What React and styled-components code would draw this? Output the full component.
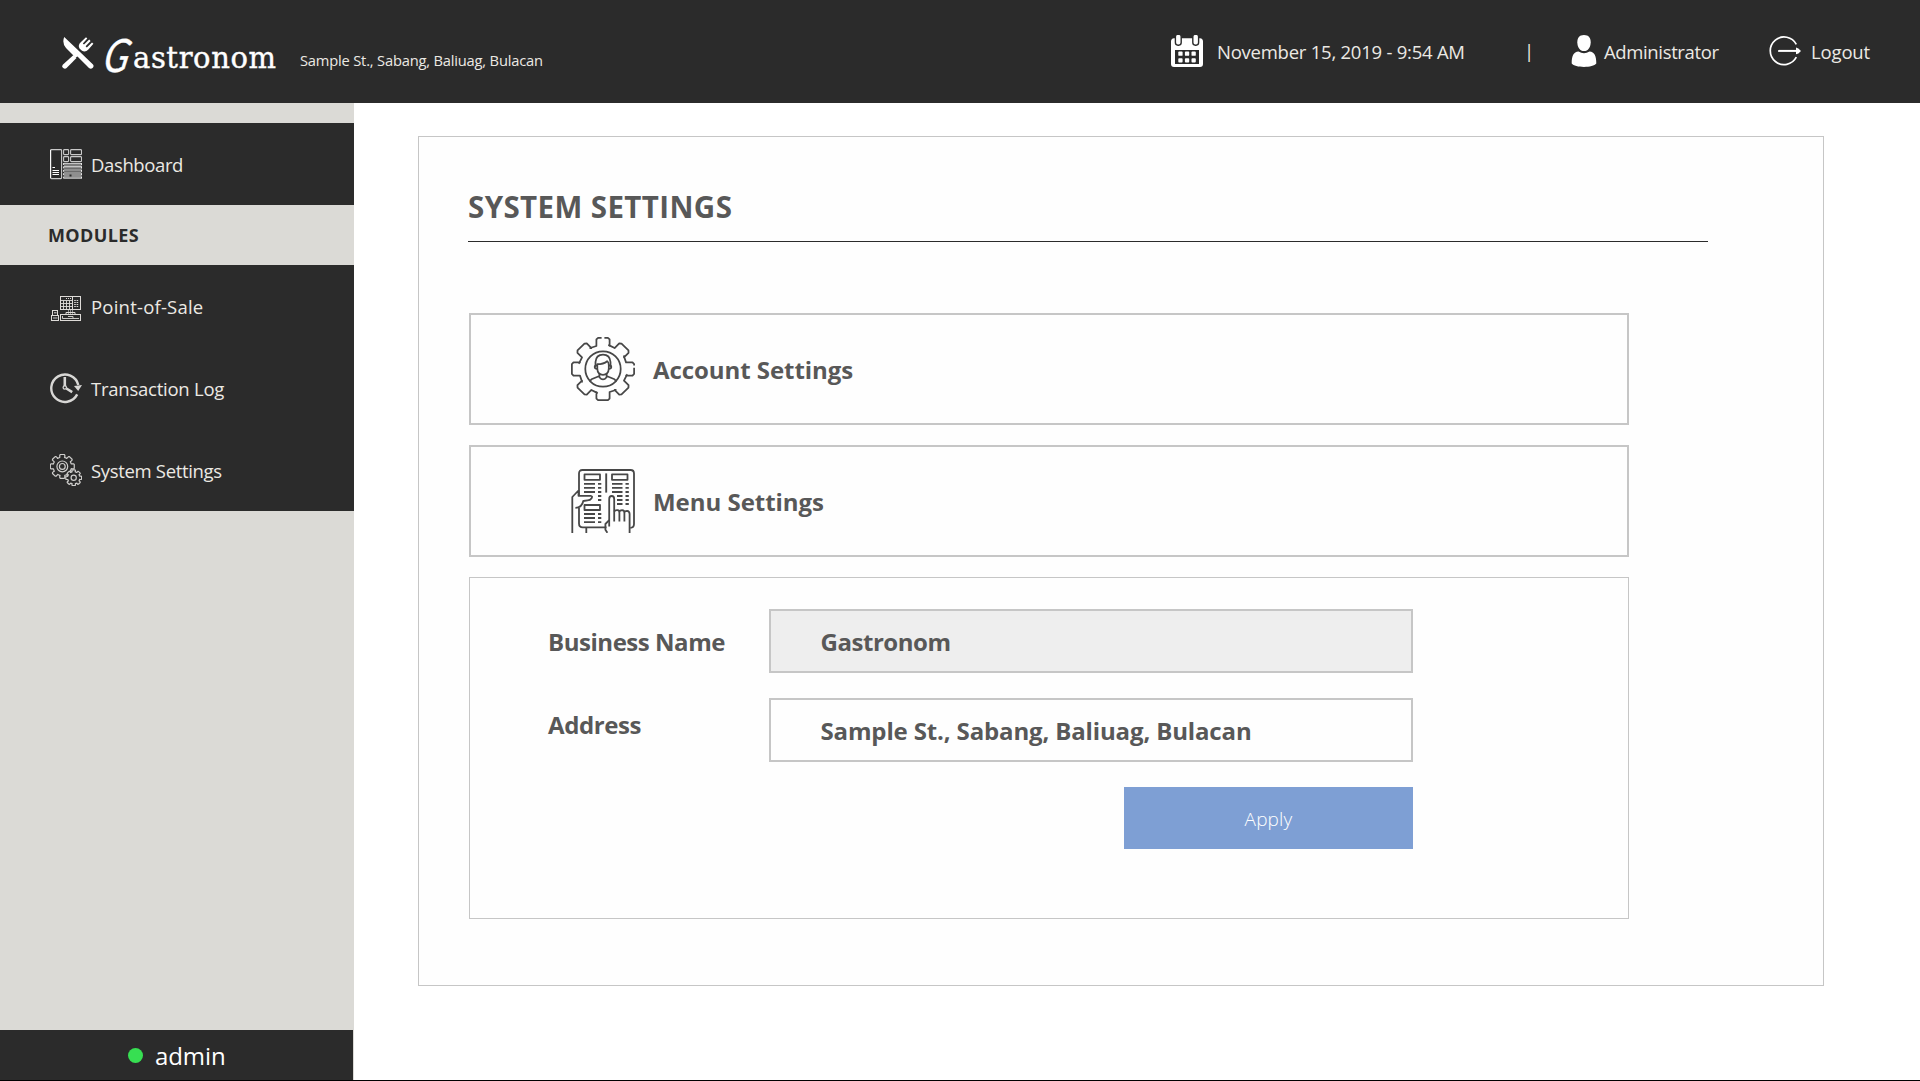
import React from 'react';
import styled, { createGlobalStyle } from 'styled-components';

const dark = '#2b2b2b';
const stone = '#dbdad6';
const line = '#c6c6c6';
const ink = '#585858';

const GlobalStyle = createGlobalStyle`
  *, *::before, *::after { box-sizing: border-box; }
  body {
    margin: 0;
    background: #fff;
    font-family: "Open Sans", "Noto Sans", sans-serif;
  }
`;

const Page = styled.div`
  display: flex;
  flex-direction: column;
  width: 1920px;
  height: 1081px;
  overflow: hidden;
  border-bottom: 1px solid #000;
`;

const Header = styled.header`
  display: flex;
  flex: none;
  height: 103px;
  padding-left: 62px;
  background: ${dark};
  color: #ebe9e4;
`;

const LogoIcon = styled.svg`
  flex: none;
  width: 32px;
  height: 32px;
  margin-top: 37px;
`;

const Wordmark = styled.div`
  display: flex;
  align-items: baseline;
  width: 206px;
  height: 60px;
  margin-top: 21px;
  padding-left: 8px;
  color: #fff;
  font-family: "DejaVu Serif", serif;
  font-size: 29px;
  line-height: 60px;
  letter-spacing: 0.6px;
  white-space: nowrap;
  -webkit-text-stroke: 0.4px #fff;
`;

const Initial = styled.span`
  width: 31px;
  font-family: Lato, sans-serif;
  font-size: 46px;
  font-style: italic;
  letter-spacing: 0;
  transform: translate(2px, 4px) skewX(-12deg) scaleX(0.8);
  transform-origin: 0 60%;
`;

const BranchAddress = styled.p`
  margin: 50px 0 0;
  font-size: 14.7px;
  line-height: 20px;
  letter-spacing: -0.19px;
  white-space: nowrap;
`;

const HeaderTools = styled.div`
  display: grid;
  grid-template-columns: 353px 44px 201px 151px;
  align-items: center;
  height: 102px;
  margin-left: auto;
`;

const Tool = styled.div`
  display: flex;
  align-items: center;
  gap: ${(p) => p.$gap}px;
`;

const Text = styled.span`
  padding-top: ${(p) => p.$drop ?? 2}px;
  font-size: 18.5px;
  line-height: 26px;
  letter-spacing: ${(p) => p.$track ?? 0}px;
  white-space: nowrap;
`;

const Glyph = styled.svg`
  flex: none;
  display: block;
  width: ${(p) => p.$size ?? 32}px;
  height: ${(p) => p.$size ?? 32}px;
`;

const Body = styled.div`
  display: flex;
  flex: 1;
  min-height: 0;
`;

const Sidebar = styled.nav`
  display: flex;
  flex-direction: column;
  width: 354px;
  padding-top: 20px;
  background: ${stone};
`;

const NavItem = styled.a`
  display: flex;
  align-items: center;
  gap: 9px;
  height: 82px;
  padding-left: 50px;
  background: ${dark};
  color: #ebe9e4;
`;

const NavHeading = styled.h2`
  height: 60px;
  margin: 0;
  padding-left: 48px;
  color: ${dark};
  font-size: 18px;
  font-weight: 700;
  line-height: 61px;
  letter-spacing: 0.37px;
`;

const UserBar = styled.div`
  display: flex;
  align-items: center;
  gap: 12px;
  width: 353px;
  height: 50px;
  margin-top: auto;
  padding-left: 128px;
  background: ${dark};
  color: #fff;
  font-size: 24px;
  line-height: 50px;
  letter-spacing: -0.1px;
`;

const UserName = styled.span`
  padding-top: 2px;
`;

const StatusDot = styled.span`
  width: 15px;
  height: 15px;
  border-radius: 50%;
  background: #37df52;
`;

const Main = styled.main`
  flex: 1;
  padding: 33px 0 0 64px;
`;

const Card = styled.section`
  width: 1406px;
  height: 850px;
  padding: 44px 49px 0;
  border: 1px solid ${line};
  background: #fefefe;
`;

const Title = styled.h1`
  width: 1240px;
  height: 61px;
  margin: 0 0 71px;
  padding-top: 6px;
  border-bottom: 1px solid ${dark};
  color: ${ink};
  font-size: 29.5px;
  font-weight: 700;
  line-height: 40px;
  letter-spacing: 0.4px;
`;

const Stack = styled.div`
  display: flex;
  flex-direction: column;
  gap: 20px;
  width: 1160px;
  margin-left: 1px;
`;

const OptionButton = styled.button`
  display: flex;
  align-items: center;
  gap: 18px;
  height: 112px;
  padding: 0 0 0 100px;
  border: 2px solid ${line};
  background: #fefefe;
  color: ${ink};
  font-family: inherit;
  text-align: left;
`;

const OptionText = styled.span`
  padding-top: 2px;
  font-size: 24px;
  font-weight: 700;
  line-height: 34px;
  letter-spacing: ${(p) => p.$track}px;
`;

const Form = styled.form`
  display: grid;
  grid-template-columns: 221px 644px;
  grid-template-rows: 64px 64px 62px;
  row-gap: 25px;
  height: 342px;
  padding: 31px 0 0 78px;
  border: 1px solid ${line};
`;

const Label = styled.label`
  align-self: center;
  padding-top: 1px;
  padding-bottom: ${(p) => p.$lift ?? 0}px;
  color: ${ink};
  font-size: 24px;
  font-weight: 700;
  line-height: 34px;
  letter-spacing: ${(p) => p.$track}px;
`;

const Field = styled.input`
  width: 644px;
  height: 64px;
  padding: 0 49.5px;
  border: 2px solid ${line};
  border-radius: 0;
  outline: none;
  background: ${(p) => (p.readOnly ? '#eeeeee' : '#fefefe')};
  color: ${ink};
  font: 700 24px "Open Sans", "Noto Sans", sans-serif;
  letter-spacing: ${(p) => p.$track}px;
`;

const ApplyButton = styled.button`
  grid-column: 2;
  justify-self: end;
  width: 289px;
  height: 62px;
  padding: 1px 0 0;
  border: 0;
  background: #7e9fd4;
  color: #fff;
  font: 300 19px "Open Sans", "Noto Sans", sans-serif;
  letter-spacing: 0.17px;
`;

/* Outline of an eight-toothed cog centred on (cx, cy), scaled from a 32-unit radius. */
function cogPath(cx, cy, r) {
  const k = r / 32;
  const tooth = [[-13, -21.3], [-6.7, -23.4], [-6.7, -30], [-5, -31.6], [5, -31.6], [6.7, -30], [6.7, -23.4]];
  const pts = [];
  for (let i = 0; i < 8; i += 1) {
    const a = (i * Math.PI) / 4;
    tooth.forEach(([x, y]) => {
      const px = cx + k * (x * Math.cos(a) - y * Math.sin(a));
      const py = cy + k * (x * Math.sin(a) + y * Math.cos(a));
      pts.push(`${px.toFixed(2)} ${py.toFixed(2)}`);
    });
  }
  return `M${pts.join('L')}Z`;
}

const CutleryIcon = () => (
  <LogoIcon viewBox="0 0 32 32" fill="#fff">
    <path d="M2.2 0 L17.5 14.5 L31 27.5 Q32.3 29.3 30.6 31 Q28.8 32.6 27 31 L15.5 19.5 L13.5 20.5 L4 11 Q-.2 6 2.2 0Z" />
    <path d="M11.5 18 L14.5 21 L4.6 31 Q3 32.6 1.2 31 Q-.5 29.3 1 27.5Z" />
    <path d="M17.5 11.5 Q15.5 8 19 5 L24 .3 L25.3 1.5 L20.8 6.4 L22 7.6 L27.2 2.6 L28.6 4 L23.6 9.2 L24.8 10.4 L30 5.4 L31.4 6.7 L26.4 12.4 Q23.5 15.6 20 13.8Z" />
  </LogoIcon>
);

const CalendarIcon = () => (
  <Glyph viewBox="0 0 32 32">
    <path fill="#fff" fillRule="evenodd" d="M3 3.2H29Q32 3.6 32 6.6V29Q32 32 29 32H3Q0 32 0 29V6.6Q0 3.6 3 3.2ZM4 15V29H28V15Z" />
    <g fill="#fff" stroke={dark} strokeWidth="1.4">
      <rect x="4.4" y="-.8" width="5.8" height="11" rx="2.6" />
      <rect x="21.8" y="-.8" width="5.8" height="11" rx="2.6" />
    </g>
    <g fill="#fff">
      {[7.3, 13.9, 20.5].map((x) => [16.6, 23.2].map((y) => (
        <rect key={`${x}-${y}`} x={x} y={y} width="4.3" height="4.2" rx=".9" />
      )))}
    </g>
  </Glyph>
);

const PersonIcon = () => (
  <Glyph viewBox="0 0 32 32" fill="#fff">
    <path d="M16 0C20.6 0 22.7 2.8 22.7 7.2C22.7 12.4 20 16 16 16S9.3 12.4 9.3 7.2C9.3 2.8 11.4 0 16 0Z" />
    <path d="M10.5 16.6Q16 19.8 21.5 16.6C26.5 17 28.3 21 28.3 28.6C26.6 30.9 21.5 32 16 32S5.4 30.9 3.7 28.6C3.7 21 5.5 17 10.5 16.6Z" />
  </Glyph>
);

const LogoutIcon = () => (
  <Glyph viewBox="0 0 32 32" fill="none" stroke="#fff">
    <path strokeWidth="1.7" d="M27.3 9.4A13.8 13.8 0 1 0 27.3 22.2" />
    <path strokeWidth="2" d="M9.2 15.9H28" />
    <path fill="#fff" stroke="none" d="M27 12.6L29.4 13.4L32 15.9L29.4 18.4L27 19.2Z" />
  </Glyph>
);

const DashboardIcon = () => (
  <Glyph viewBox="0 0 32 32" fill="none" stroke="#c9c9c9">
    <rect x=".6" y="1.6" width="11" height="29" rx=".8" strokeWidth="1.1" />
    <path stroke="#fff" d="M.6 2V30M2.5 19.5H5M2.5 22.5H9M2.5 24.5H9M2.5 26.5H9" />
    <g strokeWidth="1.1">
      <rect x="13.6" y="1.6" width="5" height="5" rx=".8" />
      <rect x="20.6" y="1.6" width="10.9" height="5" rx=".8" />
      <rect x="13.6" y="8.6" width="5" height="5" rx=".8" />
      <rect x="20.6" y="8.6" width="10.9" height="5" rx=".8" />
    </g>
    <rect x="14" y="15" width="17.5" height="15.5" fill="#8e8e8e" stroke="none" />
    <path stroke="#c4c4c4" d="M14 15.5H31.5M14 18.5H31.5M14 30.2H31.5" />
    <path stroke="#6b6b6b" d="M14 17H31.5M14 20.5H31.5M14 23.5H31.5" />
    <path stroke="#e8e8e8" strokeDasharray="2 1.4" d="M13.6 15V30.5M31.5 15V30.5" />
    <rect x="19.5" y="26.5" width="2" height="2" fill={dark} stroke="none" />
  </Glyph>
);

const RegisterIcon = () => (
  <Glyph viewBox="0 0 32 32" fill="none" stroke="#dedbd8">
    <rect x="10.5" y="6.5" width="20" height="13" />
    <path d="M22.5 6.5V19.5" />
    <path strokeWidth=".9" d="M13.5 10.5V19M16.5 10.5V19M19.5 10.5V19M11 10.5H22M11 13.5H22M11 16.5H22" />
    <path strokeDasharray="1 1" d="M16 8.5H21" />
    <path strokeDasharray="1.6 .8" d="M24.2 10.5H29M24.2 12.5H29M24.2 14.5H29M24.2 16.5H29" />
    <path stroke="#8e8e8e" d="M18.5 20V24M20.5 20V24M22.5 20V24" />
    <path d="M16 22.5H25M16 22.5V24M25 22.5V24" />
    <rect x="10.5" y="24.5" width="20" height="6" />
    <path d="M12.5 26V28.5H29M18 26.5H23V28" strokeWidth=".9" />
    <rect x="2.5" y="20.5" width="5" height="5" />
    <path d="M4 22.8H6.5" />
    <rect x="1.5" y="25.5" width="7" height="5" />
    <path stroke="#8e8e8e" strokeWidth="1.6" d="M3 28H7.5" />
  </Glyph>
);

const HistoryIcon = () => (
  <Glyph viewBox="0 0 32 32" fill="none" stroke="#d8d7d5">
    <path strokeWidth="2.4" d="M28.3 13A13.7 13.7 0 1 0 27.2 22.4" />
    <path fill="#d8d7d5" stroke="none" d="M24 14L32 13L28.2 19Z" />
    <path strokeWidth="2.6" d="M14.8 5V14M16.4 16.5L22.2 20.1" />
    <circle cx="14.8" cy="15.5" r="1.7" strokeWidth="1.3" />
  </Glyph>
);

const CogsIcon = () => (
  <Glyph viewBox="0 0 32 32" fill="none" stroke="#cfcecc" strokeWidth="1.2" strokeLinejoin="round">
    <path d={cogPath(12.3, 12.4, 12.1)} />
    <circle cx="12.3" cy="12.4" r="5.4" />
    <circle cx="12.3" cy="12.4" r="2.9" />
    <path fill={dark} d={cogPath(23.7, 23.8, 8)} />
    <circle cx="23.7" cy="23.8" r="2.6" />
  </Glyph>
);

const AccountCogIcon = () => (
  <Glyph $size={64} viewBox="0 0 64 64" fill="none" stroke="#474747" strokeWidth="1.75" strokeLinecap="round" strokeLinejoin="round">
    <path d={cogPath(32, 32, 31.5)} />
    <path stroke="#fefefe" strokeWidth="3" strokeLinecap="butt" d="M30.6 .8H33.4M63.2 28.4V30.8" />
    <circle cx="32" cy="32" r="17.7" />
    <path d="M24.5 29V25Q25 17.5 32 17.5T39.5 25V29" />
    <path d="M26.3 27.2Q32.5 27.2 36.2 24.2Q37.8 25 37.8 28V31.5Q37.5 37.8 32 37.8T26.3 31.5Z" />
    <path d="M26 28.4Q23.6 28.2 23.7 30T26.2 32M38 28.4Q40.4 28.2 40.3 30T37.8 32" />
    <path d="M28.4 37V40.2Q32 44.6 35.6 40.2V37M28.4 39L20.5 42.3L19 43.8M35.6 39L43.5 42.3L45 43.8" />
  </Glyph>
);

const MenuBoardIcon = () => (
  <Glyph $size={64} viewBox="0 0 64 64" fill="none" stroke="#474747" strokeWidth="1.8" strokeLinejoin="round">
    <path d="M8 26V4.5Q8 1 11.5 1H59.5Q63 1 63 4.5V55Q63 58.6 59.3 58.9" />
    <path d="M8 39V54.5Q8 58.4 11.8 58.4H35.5" />
    <path d="M13.5 5.4H29V10.8H13.5ZM41 5.4H56.5V10.8H41ZM13.5 36H29V41H13.5Z" />
    <path d="M35.2 4.4V23.6" strokeWidth="1.9" />
    <path d="M13 14.8H24M13 18.9H24M13 23H24M41 14.8H51.5M41 18.9H51.5M41 23H51.5M46 27H51.5M46 31H51.5M46 35H51.5M13 45H24M13 49H24M13 53.2H24" />
    <path d="M27 14.8H30.3M27 18.9H30.3M27 23H30.3M27 27H30.3M27 31H30.3M54.5 14.8H57.8M54.5 18.9H57.8M54.5 23H57.8M54.5 27H57.8M54.5 31H57.8M54.5 35H57.8M27 45H30.3M27 49H30.3M27 53.2H30.3" />
    <path d="M1.3 64V28L7 22M7.5 21V26.8H19.5Q22 27 20.6 29.2Q19.3 31.4 16.5 31.4L12.3 32Q11 38.6 4.4 38.8M15.3 58.4V64" />
    <path d="M38.2 57.5V30.2Q38.2 27 40.7 27T43.2 30.2V52.5" />
    <path d="M43.2 42.5Q44 41 46.5 41.2Q48.6 41.4 48.4 44V52.5M48.4 43Q49 41.2 51 41.2Q53.6 41.4 53.4 44V52.5M53.4 43.3Q54 41.8 56 41.8Q58.6 42 58.6 45V64" />
    <path d="M38.2 51.2L34.4 55V60.8L36.4 63.8" />
  </Glyph>
);

const navItems = [
  { label: 'Point-of-Sale', track: 0.22, icon: RegisterIcon },
  { label: 'Transaction Log', track: -0.24, icon: HistoryIcon },
  { label: 'System Settings', track: -0.33, icon: CogsIcon },
];

export default function App() {
  return (
    <Page>
      <GlobalStyle />
      <Header>
        <CutleryIcon />
        <Wordmark><Initial>G</Initial>astronom</Wordmark>
        <BranchAddress>Sample St., Sabang, Baliuag, Bulacan</BranchAddress>
        <HeaderTools>
          <Tool $gap={14}>
            <CalendarIcon />
            <Text $track={-0.24}>November 15, 2019 - 9:54 AM</Text>
          </Tool>
          <Text $drop={0}>|</Text>
          <Tool $gap={4}>
            <PersonIcon />
            <Text $track={-0.36}>Administrator</Text>
          </Tool>
          <Tool $gap={10}>
            <LogoutIcon />
            <Text $track={-0.15}>Logout</Text>
          </Tool>
        </HeaderTools>
      </Header>
      <Body>
        <Sidebar>
          <NavItem>
            <DashboardIcon />
            <Text $track={-0.38}>Dashboard</Text>
          </NavItem>
          <NavHeading>MODULES</NavHeading>
          {navItems.map(({ label, track, icon: Icon }) => (
            <NavItem key={label}>
              <Icon />
              <Text $track={track}>{label}</Text>
            </NavItem>
          ))}
          <UserBar><StatusDot /><UserName>admin</UserName></UserBar>
        </Sidebar>
        <Main>
          <Card>
            <Title>SYSTEM SETTINGS</Title>
            <Stack>
              <OptionButton>
                <AccountCogIcon />
                <OptionText $track={-0.06}>Account Settings</OptionText>
              </OptionButton>
              <OptionButton>
                <MenuBoardIcon />
                <OptionText $track={-0.03}>Menu Settings</OptionText>
              </OptionButton>
              <Form>
                <Label $track={-0.46} htmlFor="business">Business Name</Label>
                <Field $track={-0.45} id="business" readOnly value="Gastronom" />
                <Label $track={-0.4} $lift={11} htmlFor="address">Address</Label>
                <Field $track={-0.14} id="address" defaultValue="Sample St., Sabang, Baliuag, Bulacan" />
                <ApplyButton type="button">Apply</ApplyButton>
              </Form>
            </Stack>
          </Card>
        </Main>
      </Body>
    </Page>
  );
}
